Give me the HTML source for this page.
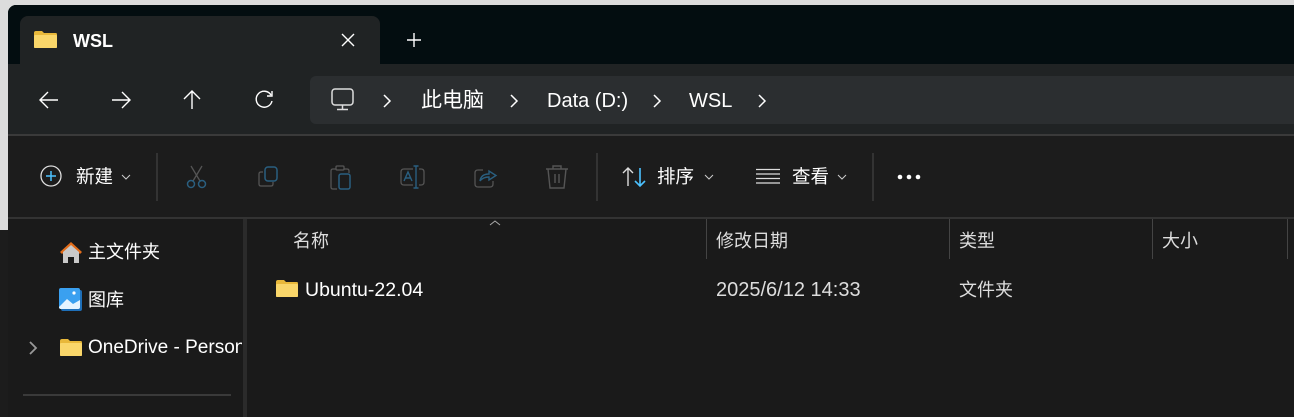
<!DOCTYPE html>
<html><head><meta charset="utf-8"><style>
*{margin:0;padding:0;box-sizing:border-box}
body{width:1294px;height:417px;overflow:hidden;background:#dcdcdc;font-family:"Segoe UI","Liberation Sans","Noto Sans CJK SC",sans-serif;color:#fff;position:relative}
.abs{position:absolute}
.t{position:absolute;white-space:nowrap;font-size:18px;line-height:20px}
svg{position:absolute;overflow:visible}
</style></head><body>
<div class="abs" style="left:0;top:230px;width:8px;height:187px;background:#1c1c1c"></div>
<div class="abs" style="left:8px;top:5px;width:1286px;height:412px;background:#1a1a1a;border-top-left-radius:8px;overflow:hidden">
</div>
<!-- title bar -->
<div class="abs" style="left:8px;top:5px;width:1286px;height:59px;background:#030d10;border-top-left-radius:8px"></div>
<div class="abs" style="left:20px;top:16px;width:360px;height:48px;background:#202324;border-radius:8px 8px 0 0"></div>
<svg style="left:34px;top:31px" width="24" height="18"><path d="M0 2 Q0 0 2 0 H8 L10 2 H22 Q23 2 23 4 V16 Q23 17 22 17 H1 Q0 17 0 16Z" fill="#e8b83a"/><rect x="0" y="4" width="23" height="13" rx="1" fill="#f9d66a"/></svg>
<div class="t" style="left:73px;top:31px;font-weight:bold;font-size:18px">WSL</div>
<svg style="left:341px;top:33px" width="14" height="14"><path d="M1 1L13 13M13 1L1 13" stroke="#fff" stroke-width="1.4"/></svg>
<svg style="left:406px;top:32px" width="16" height="16"><path d="M8 1V15M1 8H15" stroke="#fff" stroke-width="1.4"/></svg>
<!-- nav -->
<div class="abs" style="left:8px;top:64px;width:1286px;height:70px;background:#202324"></div>
<div class="abs" style="left:8px;top:134px;width:1286px;height:2px;background:#3a3a3a"></div>
<div class="abs" style="left:310px;top:76px;width:984px;height:48px;background:#2b2e30;border-radius:6px 0 0 6px"></div>
<svg style="left:39px;top:91px" width="20" height="18"><path d="M19 9H1M9 1L1 9L9 17" stroke="#fff" stroke-width="1.4" fill="none"/></svg>
<svg style="left:111px;top:91px" width="20" height="18"><path d="M1 9H19M11 1L19 9L11 17" stroke="#fff" stroke-width="1.4" fill="none"/></svg>
<svg style="left:183px;top:90px" width="18" height="20"><path d="M9 19V1M1 9L9 1L17 9" stroke="#fff" stroke-width="1.4" fill="none"/></svg>
<svg style="left:255px;top:90px" width="20" height="20"><path d="M16 5A8 8 0 1 0 17 11" stroke="#fff" stroke-width="1.4" fill="none"/><path d="M17 1V6H12" stroke="#fff" stroke-width="1.4" fill="none"/></svg>
<svg style="left:331px;top:88px" width="24" height="24"><rect x="1" y="1" width="21" height="16" rx="3" stroke="#ddd" stroke-width="1.5" fill="none"/><path d="M11.5 17V21M6 21.5H17" stroke="#ddd" stroke-width="1.5"/></svg>
<svg style="left:383px;top:94px" width="8" height="14"><path d="M1 1L7 7L1 13" stroke="#fff" stroke-width="1.5" fill="none"/></svg>
<div class="t" style="left:421px;top:90px;font-size:21px;line-height:22px">此电脑</div>
<svg style="left:510px;top:94px" width="8" height="14"><path d="M1 1L7 7L1 13" stroke="#fff" stroke-width="1.5" fill="none"/></svg>
<div class="t" style="left:547px;top:90px;font-size:20px;line-height:22px">Data (D:)</div>
<svg style="left:653px;top:94px" width="8" height="14"><path d="M1 1L7 7L1 13" stroke="#fff" stroke-width="1.5" fill="none"/></svg>
<div class="t" style="left:689px;top:90px;font-size:20px;line-height:22px">WSL</div>
<svg style="left:758px;top:94px" width="8" height="14"><path d="M1 1L7 7L1 13" stroke="#fff" stroke-width="1.5" fill="none"/></svg>
<!-- toolbar -->
<div class="abs" style="left:8px;top:136px;width:1286px;height:81px;background:#1c1c1c"></div>
<div class="abs" style="left:8px;top:217px;width:1286px;height:2px;background:#333"></div>
<svg style="left:40px;top:165px" width="22" height="22"><circle cx="11" cy="11" r="10" stroke="#ddd" stroke-width="1.3" fill="none"/><path d="M11 6V16M6 11H16" stroke="#4cc2ff" stroke-width="1.5"/></svg>
<div class="t" style="left:76px;top:167px;font-size:18.5px">新建</div>
<svg style="left:121px;top:174px" width="10" height="6"><path d="M1 1L5 5L9 1" stroke="#ccc" stroke-width="1" fill="none"/></svg>
<div class="abs" style="left:156px;top:153px;width:2px;height:48px;background:#333"></div>
<svg style="left:186px;top:165px" width="22" height="24"><path d="M5 1L14 16M16 1L7 16" stroke="#555" stroke-width="1.3"/><circle cx="5" cy="19" r="3.5" stroke="#2a5f80" stroke-width="1.5" fill="none"/><circle cx="16" cy="19" r="3.5" stroke="#2a5f80" stroke-width="1.5" fill="none"/></svg>
<svg style="left:258px;top:166px" width="22" height="22"><path d="M5 6H3Q1 6 1 8V18Q1 20 3 20H13Q15 20 15 18V16" stroke="#555" stroke-width="1.3" fill="none"/><rect x="7" y="1" width="12" height="14" rx="3" stroke="#2a5f80" stroke-width="1.5" fill="none"/></svg>
<svg style="left:330px;top:165px" width="22" height="26"><path d="M6 4H3Q1 4 1 6V22Q1 24 3 24H7M14 4H17Q19 4 19 6V8" stroke="#555" stroke-width="1.3" fill="none"/><rect x="6" y="1" width="8" height="4" rx="1" stroke="#555" stroke-width="1.3" fill="none"/><rect x="9" y="9" width="11" height="15" rx="2" stroke="#2a5f80" stroke-width="1.5" fill="none"/></svg>
<svg style="left:400px;top:165px" width="26" height="24"><path d="M13 4H4Q1 4 1 7V17Q1 20 4 20H13M19 4H21Q24 4 24 7V17Q24 20 21 20H19" stroke="#555" stroke-width="1.3" fill="none"/><path d="M4 16L8 7L12 16M5.5 13H10.5M16 1V23M13.5 1H18.5M13.5 23H18.5" stroke="#2a5f80" stroke-width="1.4" fill="none"/></svg>
<svg style="left:474px;top:166px" width="24" height="22"><path d="M9 4H4Q1 4 1 7V18Q1 21 4 21H16Q19 21 19 18V15" stroke="#555" stroke-width="1.3" fill="none"/><path d="M6 15Q7 8 15 8V5L22 9.5L15 14V11Q9 11 6 15Z" stroke="#2a5f80" stroke-width="1.4" fill="none"/></svg>
<svg style="left:545px;top:164px" width="24" height="26"><path d="M1 5H23M8 5V2H16V5M3 5L5 24H19L21 5M10 10V19M14 10V19" stroke="#555" stroke-width="1.4" fill="none"/></svg>
<div class="abs" style="left:596px;top:153px;width:2px;height:48px;background:#333"></div>
<svg style="left:622px;top:167px" width="26" height="20"><path d="M6 19V1M1 6L6 1L11 6" stroke="#ddd" stroke-width="1.4" fill="none"/><path d="M18 1V19M13 14L18 19L23 14" stroke="#4cc2ff" stroke-width="1.6" fill="none"/></svg>
<div class="t" style="left:657px;top:167px;font-size:18.5px">排序</div>
<svg style="left:704px;top:174px" width="10" height="6"><path d="M1 1L5 5L9 1" stroke="#ccc" stroke-width="1" fill="none"/></svg>
<svg style="left:756px;top:168px" width="24" height="16"><path d="M0 1.5H24M0 6H24M0 10.5H24M0 15H24" stroke="#ddd" stroke-width="1.3"/></svg>
<div class="t" style="left:792px;top:167px;font-size:18.5px">查看</div>
<svg style="left:837px;top:174px" width="10" height="6"><path d="M1 1L5 5L9 1" stroke="#ccc" stroke-width="1" fill="none"/></svg>
<div class="abs" style="left:872px;top:153px;width:2px;height:48px;background:#333"></div>
<svg style="left:897px;top:174px" width="26" height="6"><circle cx="3" cy="3" r="2.3" fill="#fff"/><circle cx="12" cy="3" r="2.3" fill="#fff"/><circle cx="21" cy="3" r="2.3" fill="#fff"/></svg>
<!-- sidebar -->
<div class="abs" style="left:243px;top:219px;width:4px;height:198px;background:#2b2b2b"></div>
<div class="abs" style="left:23px;top:394px;width:208px;height:2px;background:#3a3a3a"></div>
<svg style="left:59px;top:240px" width="24" height="24"><path d="M12 2L1 12L3 14L12 6L21 14L23 12Z" fill="#e36d1a"/><path d="M4 12V23H9V17H15V23H20V12L12 5Z" fill="#c9c9c9"/></svg>
<div class="t" style="left:88px;top:242px">主文件夹</div>
<svg style="left:59px;top:288px" width="24" height="24"><rect x="2" y="2" width="21" height="21" rx="2" fill="#1e6fb8"/><rect x="0" y="0" width="21" height="21" rx="2" fill="#3aa0f0"/><path d="M0 19L8 11L14 16L21 12V19Q21 21 19 21H2Q0 21 0 19Z" fill="#e6f4ff"/><circle cx="15" cy="5" r="1.6" fill="#fff"/></svg>
<div class="t" style="left:88px;top:290px">图库</div>
<svg style="left:29px;top:341px" width="8" height="14"><path d="M1 1L7 7L1 13" stroke="#999" stroke-width="1.8" fill="none"/></svg>
<svg style="left:60px;top:339px" width="23" height="18"><path d="M0 2Q0 0 2 0H8L10 2H21Q22 2 22 4V16Q22 17 21 17H1Q0 17 0 16Z" fill="#e8b83a"/><rect x="0" y="4" width="22" height="13" rx="1" fill="#f9d66a"/></svg>
<div class="abs" style="left:88px;top:336px;width:154px;height:26px;overflow:hidden"><div class="t" style="left:0;top:2px;font-size:19px">OneDrive - Personal</div></div>
<!-- header -->
<svg style="left:489px;top:220px" width="12" height="6"><path d="M1 5L6 1L11 5" stroke="#aaa" stroke-width="1" fill="none"/></svg>
<div class="t" style="left:293px;top:231px;font-size:18px;color:#ddd">名称</div>
<div class="abs" style="left:706px;top:219px;width:1px;height:40px;background:#444"></div>
<div class="t" style="left:716px;top:231px;font-size:18px;color:#ddd">修改日期</div>
<div class="abs" style="left:949px;top:219px;width:1px;height:40px;background:#444"></div>
<div class="t" style="left:959px;top:231px;font-size:18px;color:#ddd">类型</div>
<div class="abs" style="left:1152px;top:219px;width:1px;height:40px;background:#444"></div>
<div class="t" style="left:1162px;top:231px;font-size:18px;color:#ddd">大小</div>
<div class="abs" style="left:1287px;top:219px;width:1px;height:40px;background:#444"></div>
<svg style="left:276px;top:280px" width="23" height="18"><path d="M0 2Q0 0 2 0H8L10 2H21Q22 2 22 4V16Q22 17 21 17H1Q0 17 0 16Z" fill="#e8b83a"/><rect x="0" y="4" width="22" height="13" rx="1" fill="#f9d66a"/></svg>
<div class="t" style="left:305px;top:280px;font-size:19.5px">Ubuntu-22.04</div>
<div class="t" style="left:716px;top:280px;color:#ddd;font-size:20px">2025/6/12 14:33</div>
<div class="t" style="left:959px;top:280px;color:#ddd">文件夹</div>
</body></html>
